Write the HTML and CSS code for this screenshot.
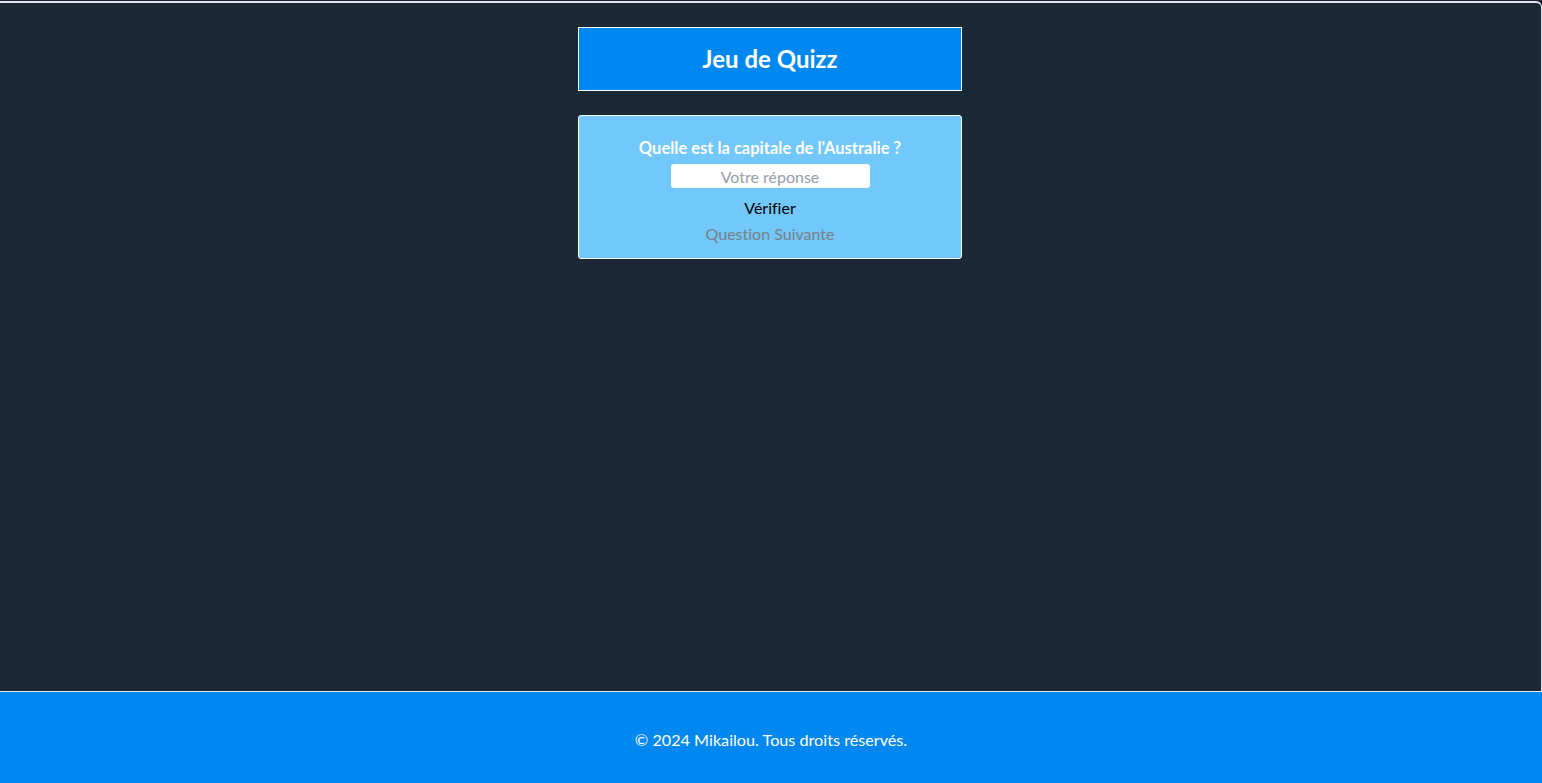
FILE: index.html
```html
<!DOCTYPE html>
<html lang="fr">
<head>
<meta charset="utf-8">
<title>Jeu de Quizz</title>
<link rel="stylesheet" href="styles.css">
</head>
<body>
<div class="page">
  <main class="main">
    <header class="title-box"><h1>Jeu de Quizz</h1></header>
    <section class="card">
      <p class="question">Quelle est la capitale de l'Australie ?</p>
      <input class="answer" type="text" placeholder="Votre réponse">
      <button class="btn check">Vérifier</button>
      <button class="btn next" disabled>Question Suivante</button>
    </section>
  </main>
  <footer class="footer">© 2024 Mikailou. Tous droits réservés.</footer>
</div>
</body>
</html>
```

FILE: styles.css
```css
html, body {
  margin: 0;
  padding: 0;
  height: 100%;
}
body {
  background: #1b2836;
  font-family: "Lato", "Open Sans", sans-serif;
  font-size: 16px;
  font-variant-ligatures: none;
}
.page {
  display: flex;
  flex-direction: column;
  height: 783px;
}
.main {
  height: 691px;
  flex: none;
  box-sizing: border-box;
  background: #1b2836;
  border-top: 2px solid #e2e6ee;
  border-right: 1px solid #e2e6ee;
  border-bottom: 1px solid #e2e6ee;
  border-top-right-radius: 6px;
  margin-top: 1px;
  padding-right: 1px;
  display: flex;
  flex-direction: column;
  align-items: center;
  padding-top: 24px;
}
.title-box {
  width: 384px;
  height: 64px;
  box-sizing: border-box;
  background: #0088f0;
  border: 1px solid #ffffff;
  display: flex;
  align-items: center;
  justify-content: center;
}
.title-box h1 {
  margin: 0;
  color: #ffffff;
  font-size: 24px;
  font-weight: 700;
  line-height: 28px;
  padding-bottom: 1px;
}
.card {
  margin-top: 24px;
  width: 384px;
  height: 144px;
  box-sizing: border-box;
  background: #72c7fb;
  border: 1px solid #ffffff;
  border-radius: 3px;
  display: flex;
  flex-direction: column;
  align-items: center;
  padding-top: 21px;
}
.question {
  margin: 0;
  color: #ffffff;
  font-weight: 700;
  font-size: 16.5px;
  line-height: 22px;
}
.answer {
  margin-top: 5px;
  width: 199px;
  height: 24px;
  box-sizing: border-box;
  border: none;
  border-radius: 3px;
  background: #ffffff;
  font-family: inherit;
  font-size: 16px;
  text-align: center;
  padding: 0;
}
.answer::placeholder {
  color: #969eab;
}
.btn {
  background: transparent;
  border: none;
  padding: 0;
  font-family: inherit;
  font-size: 16px;
  line-height: 22px;
  font-variant-ligatures: none;
}
.check {
  margin-top: 9px;
  color: #000000;
}
.next {
  margin-top: 4px;
  color: #7a7f85;
}
.footer {
  flex: 1;
  display: flex;
  align-items: center;
  justify-content: center;
  background: #0088f0;
  color: #ffffff;
  font-size: 16.2px;
  padding-top: 3px;
}
```
